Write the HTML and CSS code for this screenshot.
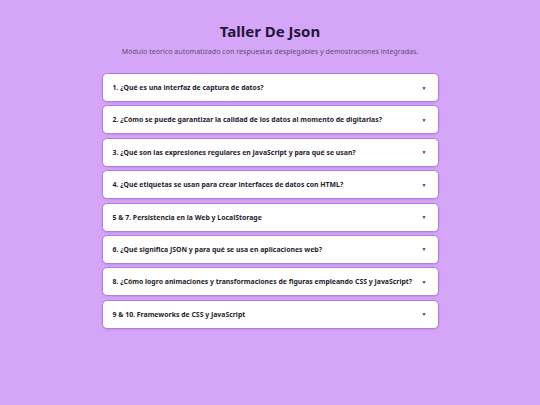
FILE: index.html
```html
<!DOCTYPE html>
<html lang="es">
<head>
<meta charset="utf-8">
<title>Taller De Json</title>
<link rel="stylesheet" href="styles.css">
</head>
<body>
<main class="page">
  <header class="header">
    <h1 class="title">Taller De Json</h1>
    <p class="subtitle">Módulo teórico automatizado con respuestas desplegables y demostraciones integradas.</p>
  </header>
  <section class="list">
    <div class="item"><span class="q">1. ¿Qué es una interfaz de captura de datos?</span><span class="arrow">▼</span></div>
    <div class="item"><span class="q">2. ¿Cómo se puede garantizar la calidad de los datos al momento de digitarlas?</span><span class="arrow">▼</span></div>
    <div class="item"><span class="q">3. ¿Qué son las expresiones regulares en JavaScript y para qué se usan?</span><span class="arrow">▼</span></div>
    <div class="item"><span class="q">4. ¿Qué etiquetas se usan para crear interfaces de datos con HTML?</span><span class="arrow">▼</span></div>
    <div class="item"><span class="q">5 &amp; 7. Persistencia en la Web y LocalStorage</span><span class="arrow">▼</span></div>
    <div class="item"><span class="q">6. ¿Qué significa JSON y para qué se usa en aplicaciones web?</span><span class="arrow">▼</span></div>
    <div class="item"><span class="q">8. ¿Cómo logro animaciones y transformaciones de figuras empleando CSS y JavaScript?</span><span class="arrow">▼</span></div>
    <div class="item"><span class="q">9 &amp; 10. Frameworks de CSS y JavaScript</span><span class="arrow">▼</span></div>
  </section>
</main>
</body>
</html>
```
FILE: styles.css
```css
html, body {
  margin: 0;
  padding: 0;
}
body {
  background: #d5a6f7;
  font-family: "Noto Sans", "Open Sans", sans-serif;
  width: 540px;
  height: 405px;
  overflow: hidden;
}
.page {
  width: 337px;
  margin: 0 auto;
  padding-top: 20px;
}
.header {
  text-align: center;
  margin-bottom: 17px;
}
.title {
  margin: 0;
  font-size: 15px;
  line-height: 22px;
  font-weight: 700;
  color: #24163a;
}
.subtitle {
  margin: 4px 0 0;
  font-size: 7.1px;
  line-height: 10px;
  color: #5e4f73;
}
.list {
  display: flex;
  flex-direction: column;
  gap: 3.4px;
}
.item {
  display: flex;
  align-items: center;
  justify-content: space-between;
  height: 29px;
  box-sizing: border-box;
  padding: 0 11px 0 10px;
  background: #ffffff;
  border: 1px solid #b37ce3;
  border-radius: 5px;
  box-shadow: 0 1px 2px rgba(90, 40, 140, 0.15);
}
.q {
  font-size: 6.9px;
  font-weight: 700;
  color: #1f1a2e;
}
.arrow {
  font-size: 5px;
  color: #3a3348;
}
```
